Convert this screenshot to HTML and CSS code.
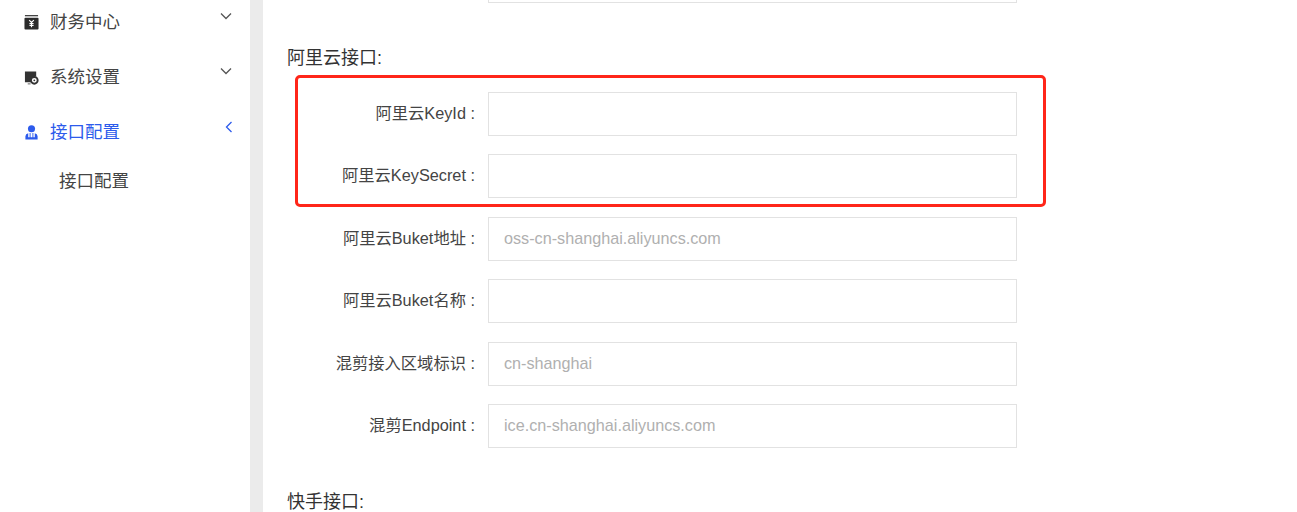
FILE: index.html
```html
<!DOCTYPE html>
<html lang="zh-CN">
<head>
<meta charset="utf-8">
<title>接口配置</title>
<link rel="stylesheet" href="styles.css">
</head>
<body>
<div class="app">
  <aside class="sidebar">
    <div class="menu-item">
      <svg class="menu-icon" viewBox="0 0 16 16"><rect x="1" y="0" width="14" height="1.4" fill="#444"/><rect x="0.5" y="3" width="15" height="12.5" rx="1" fill="#2b2b2b"/><path d="M5.500 5.500 8 8l2.500-2.500M8 8v5M5.800 9h4.400M5.800 11h4.400" fill="none" stroke="#fff" stroke-width="1.200"/></svg>
      <span class="menu-label">财务中心</span>
      <svg class="chev" viewBox="0 0 12 8"><path d="M1 1.500 6 6.500l5-5" fill="none" stroke="#555" stroke-width="1.300"/></svg>
    </div>
    <div class="menu-item">
      <svg class="menu-icon" viewBox="0 0 16 16"><path d="M1 1.500h12v5.500a5 5 0 0 0-5.500 6H1z" fill="#333"/><circle cx="11" cy="11" r="3.600" fill="none" stroke="#333" stroke-width="2"/><circle cx="11" cy="11" r="1" fill="#333"/><path d="M4 14.800h3" stroke="#555"/></svg>
      <span class="menu-label">系统设置</span>
      <svg class="chev" viewBox="0 0 12 8"><path d="M1 1.500 6 6.500l5-5" fill="none" stroke="#555" stroke-width="1.300"/></svg>
    </div>
    <div class="menu-item active">
      <svg class="menu-icon" viewBox="0 0 16 16"><circle cx="8" cy="4" r="3.800" fill="#2d5bec"/><path d="M1.500 15.500v-3.500a3.500 3.500 0 0 1 3-3.300v4.300h1.500V8.500h1v4.500h2V8.500h1v4.500h1.500V8.700a3.500 3.500 0 0 1 3 3.300v3.500z" fill="#2d5bec"/></svg>
      <span class="menu-label">接口配置</span>
      <svg class="chev chev-left" viewBox="0 0 8 12"><path d="M6.500 1 1.500 6l5 5" fill="none" stroke="#2d5bec" stroke-width="1.300"/></svg>
    </div>
    <div class="submenu-item">接口配置</div>
  </aside>
  <div class="gutter"></div>
  <main class="main">
    <div class="field"><span class="field-label"></span><div class="input"></div></div>
    <h3 class="section-title">阿里云接口:</h3>
    <div class="field"><span class="field-label">阿里云KeyId :</span><div class="input"></div></div>
    <div class="field"><span class="field-label">阿里云KeySecret :</span><div class="input"></div></div>
    <div class="field"><span class="field-label">阿里云Buket地址 :</span><div class="input">oss-cn-shanghai.aliyuncs.com</div></div>
    <div class="field"><span class="field-label">阿里云Buket名称 :</span><div class="input"></div></div>
    <div class="field"><span class="field-label">混剪接入区域标识 :</span><div class="input">cn-shanghai</div></div>
    <div class="field"><span class="field-label">混剪Endpoint :</span><div class="input">ice.cn-shanghai.aliyuncs.com</div></div>
    <h3 class="section-title section-next">快手接口:</h3>
    <div class="highlight"></div>
  </main>
</div>
</body>
</html>
```

FILE: styles.css
```css
html, body {
  margin: 0;
  height: 512px;
  overflow: hidden;
  background: #fff;
}
body {
  font-family: "Liberation Sans", "Noto Sans CJK SC", sans-serif;
  color: #333;
}
.app {
  display: flex;
  height: 512px;
  overflow: hidden;
}
.sidebar {
  width: 250px;
  flex: none;
  margin-top: -5px;
  padding-left: 24px;
  box-sizing: border-box;
}
.menu-item {
  display: flex;
  align-items: center;
  height: 55px;
  font-size: 17.500px;
  color: #444;
}
.menu-icon {
  width: 15px;
  height: 15px;
  flex: none;
  margin-right: 11px;
}
.menu-label {
  flex: none;
  line-height: 55px;
}
.chev {
  width: 12px;
  height: 8px;
  margin-left: auto;
  margin-right: 18px;
  position: relative;
  top: -7px;
}
.chev-left {
  width: 8px;
  height: 12px;
  margin-right: 17px;
  top: -6px;
}
.active {
  color: #2d5bec;
}
.submenu-item {
  font-size: 17.500px;
  line-height: 42px;
  padding-left: 35px;
  color: #444;
}
.gutter {
  width: 13px;
  flex: none;
  background: #ebebeb;
}
.main {
  flex: 1;
  position: relative;
  margin-top: -41px;
  padding-left: 25px;
}
.field {
  display: flex;
  align-items: center;
  height: 44px;
  margin-bottom: 18.400px;
}
.field-label {
  width: 187px;
  margin-right: 13px;
  padding-bottom: 4px;
  flex: none;
  text-align: right;
  font-size: 16.300px;
  color: #444;
  white-space: nowrap;
}
.input {
  width: 529px;
  height: 44px;
  box-sizing: border-box;
  border: 1px solid #e2e2e2;
  padding-left: 15px;
  line-height: 40px;
  font-size: 16.200px;
  color: #b0b0b0;
}
.section-title {
  height: 56px;
  margin: 33px 0 0 -1px;
  font-size: 18px;
  font-weight: 400;
  line-height: 44px;
  color: #333;
}
.section-next {
  margin-top: 32px;
}
.highlight {
  position: absolute;
  left: 32px;
  top: 116px;
  width: 751px;
  height: 132px;
  box-sizing: border-box;
  border: 3.500px solid #ff2619;
  border-radius: 5px;
}
```
